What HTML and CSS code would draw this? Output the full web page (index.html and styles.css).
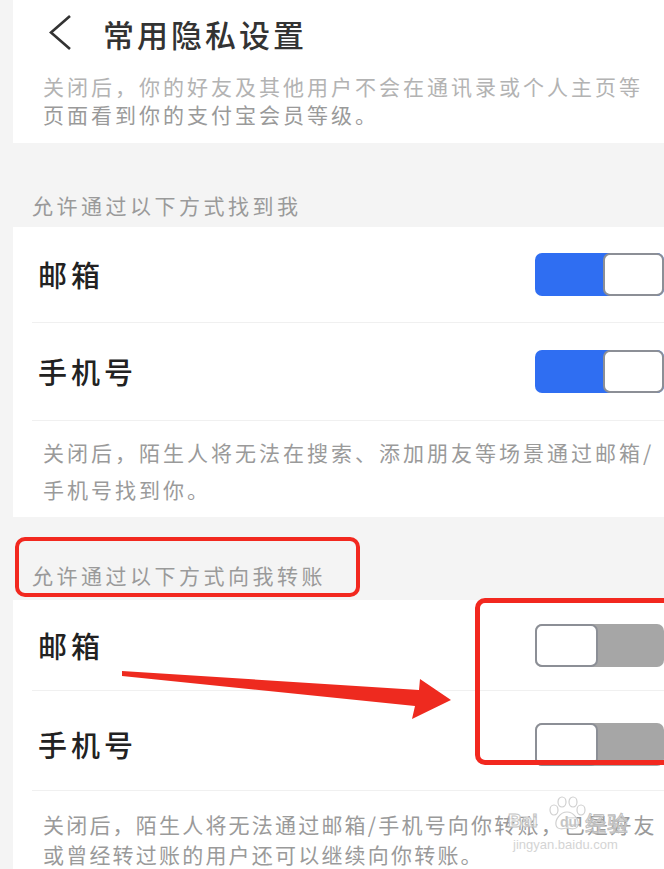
FILE: index.html
```html
<!DOCTYPE html>
<html lang="zh-CN">
<head>
<meta charset="utf-8">
<title>常用隐私设置</title>
<link rel="stylesheet" href="styles.css">
</head>
<body>
<div class="page">
  <section class="card card-top">
    <header class="topbar">
      <svg class="back" width="24" height="36" viewBox="0 0 24 36"><polyline points="22,1 3,17.5 22,34" fill="none" stroke="#333" stroke-width="2.6" stroke-linejoin="miter"/></svg>
      <h1 class="title">常用隐私设置</h1>
    </header>
    <p class="desc desc-top"><span class="faded">关闭后，你的好友及其他用户不会在通讯录或个人主页等</span><br>页面看到你的支付宝会员等级。</p>
  </section>

  <h2 class="group-title g1">允许通过以下方式找到我</h2>
  <section class="card">
    <div class="row r-a"><span class="label">邮箱</span><span class="toggle on"><span class="knob"></span></span></div>
    <div class="row r-b"><span class="label">手机号</span><span class="toggle on"><span class="knob"></span></span></div>
    <p class="desc desc-mid">关闭后，陌生人将无法在搜索、添加朋友等场景通过邮箱/<br>手机号找到你。</p>
  </section>

  <h2 class="group-title g2">允许通过以下方式向我转账</h2>
  <section class="card">
    <div class="row r-c"><span class="label">邮箱</span><span class="toggle off"><span class="knob"></span></span></div>
    <div class="row r-d"><span class="label">手机号</span><span class="toggle off"><span class="knob"></span></span></div>
    <p class="desc desc-bot">关闭后，陌生人将无法通过邮箱/手机号向你转账，已是好友<br>或曾经转过账的用户还可以继续向你转账。</p>
  </section>

  <div class="annot box1"></div>
  <div class="annot box2"></div>
  <svg class="arrow" width="664" height="869" viewBox="0 0 664 869">
    <polygon points="122,671 419,690 420,679 451,700 412,719 415,706 122,676" fill="#ee2a1f"/>
  </svg>

  <div class="watermark">
    <span class="wm-bai">Bai</span>
    <svg class="paw" width="44" height="36" viewBox="0 0 44 36">
      <g fill="rgba(255,255,255,0.7)" stroke="#d0d0d0" stroke-width="1.2">
        <ellipse cx="8" cy="14" rx="4" ry="5"/>
        <ellipse cx="16" cy="6" rx="4" ry="5"/>
        <ellipse cx="27" cy="6" rx="4" ry="5"/>
        <ellipse cx="35" cy="14" rx="4" ry="5"/>
        <path d="M21 16 C14 16 9 24 10 29 C11 34 17 33 21 32 C25 33 31 34 32 29 C33 24 28 16 21 16 Z"/>
      </g>
    </svg>
    <span class="wm-du">du</span>
    <span class="wm-jy">经验</span>
    <span class="wm-url">jingyan.baidu.com</span>
  </div>
</div>
</body>
</html>
```

FILE: styles.css
```css
* { box-sizing: border-box; }
html, body { margin: 0; padding: 0; }
body {
  background: #f4f4f4;
  font-family: "Noto Sans CJK SC", "Noto Sans", sans-serif;
  overflow: hidden;
}
.page {
  position: relative;
  width: 664px;
  height: 869px;
  padding-left: 13px;
  overflow: hidden;
}
.card {
  background: #fff;
}
.topbar {
  height: 66px;
  display: flex;
  align-items: center;
  padding-left: 35px;
}
.back { display: block; flex: none; }
.title {
  margin: 0 0 0 31px;
  font-size: 31px;
  line-height: 1;
  font-weight: 500;
  letter-spacing: 3px;
  color: #333;
}
.desc {
  margin: 0;
  padding-left: 30px;
  font-size: 21px;
  letter-spacing: 3px;
  color: #9a9a9a;
  white-space: nowrap;
}
.desc-top { padding-top: 6px; padding-bottom: 15px; line-height: 28px; }
.faded { color: #b3b3b3; }
.desc-mid { padding-top: 13px; padding-bottom: 9px; line-height: 37px; }
.desc-bot { padding-top: 18px; line-height: 30px; letter-spacing: 2.2px; }

.group-title {
  margin: 0;
  padding-left: 19px;
  font-size: 21px;
  line-height: 28px;
  font-weight: 400;
  letter-spacing: 3.5px;
  color: #9a9a9a;
}
.g1 { padding-top: 48px; padding-bottom: 8px; }
.g2 { padding-top: 44px; padding-bottom: 11px; }

.row {
  margin-left: 19px;
  padding-left: 6px;
  display: flex;
  align-items: center;
  justify-content: space-between;
  border-bottom: 1px solid #f0f0f0;
}
.r-a { height: 96px; }
.r-b { height: 98px; }
.r-c { height: 91px; }
.r-d { height: 100px; padding-top: 7px; }
.label {
  font-size: 29px;
  line-height: 1;
  font-weight: 500;
  letter-spacing: 4px;
  color: #222;
}
.toggle {
  width: 129px;
  height: 43px;
  border-radius: 7px;
  display: flex;
  flex: none;
}
.toggle.on { background: #2f6ef2; justify-content: flex-end; }
.toggle.on .knob { width: 61px; }
.toggle.off { background: #a6a6a6; justify-content: flex-start; margin-left: 2px; }
.toggle.off .knob { width: 63px; }
.knob {
  height: 100%;
  background: #fff;
  border: 2px solid #8c8f96;
  border-radius: 7px;
}

.annot {
  position: absolute;
  border: 4px solid #f2281f;
  border-radius: 10px;
  pointer-events: none;
}
.box1 { left: 15px; top: 537px; width: 345px; height: 60px; }
.box2 { left: 475px; top: 598px; width: 210px; height: 167px; border-width: 5px; }
.arrow { position: absolute; left: 0; top: 0; pointer-events: none; }

.watermark {
  position: absolute;
  left: 506px;
  top: 796px;
  width: 150px;
  height: 60px;
  pointer-events: none;
}
.watermark span { position: absolute; white-space: nowrap; }
.wm-bai {
  left: 2px; top: 15px;
  font-family: "Liberation Sans", sans-serif;
  font-weight: 700;
  font-size: 19px;
  line-height: 1;
  color: rgba(255,255,255,0.85);
  -webkit-text-stroke: 1px #c4c4c4;
}
.paw { position: absolute; left: 40px; top: 0; }
.wm-du {
  left: 54px; top: 19px;
  font-family: "Liberation Sans", sans-serif;
  font-weight: 700;
  font-size: 14px;
  line-height: 1;
  color: #c4c4c4;
}
.wm-jy {
  left: 79px; top: 16px;
  font-size: 21px;
  line-height: 1;
  letter-spacing: 1px;
  color: rgba(255,255,255,0.55);
  -webkit-text-stroke: 1px #bdbdbd;
}
.wm-url {
  left: 7px; top: 42px;
  font-family: "Liberation Sans", sans-serif;
  font-size: 13px;
  line-height: 1;
  color: #d4d4d4;
}
```
